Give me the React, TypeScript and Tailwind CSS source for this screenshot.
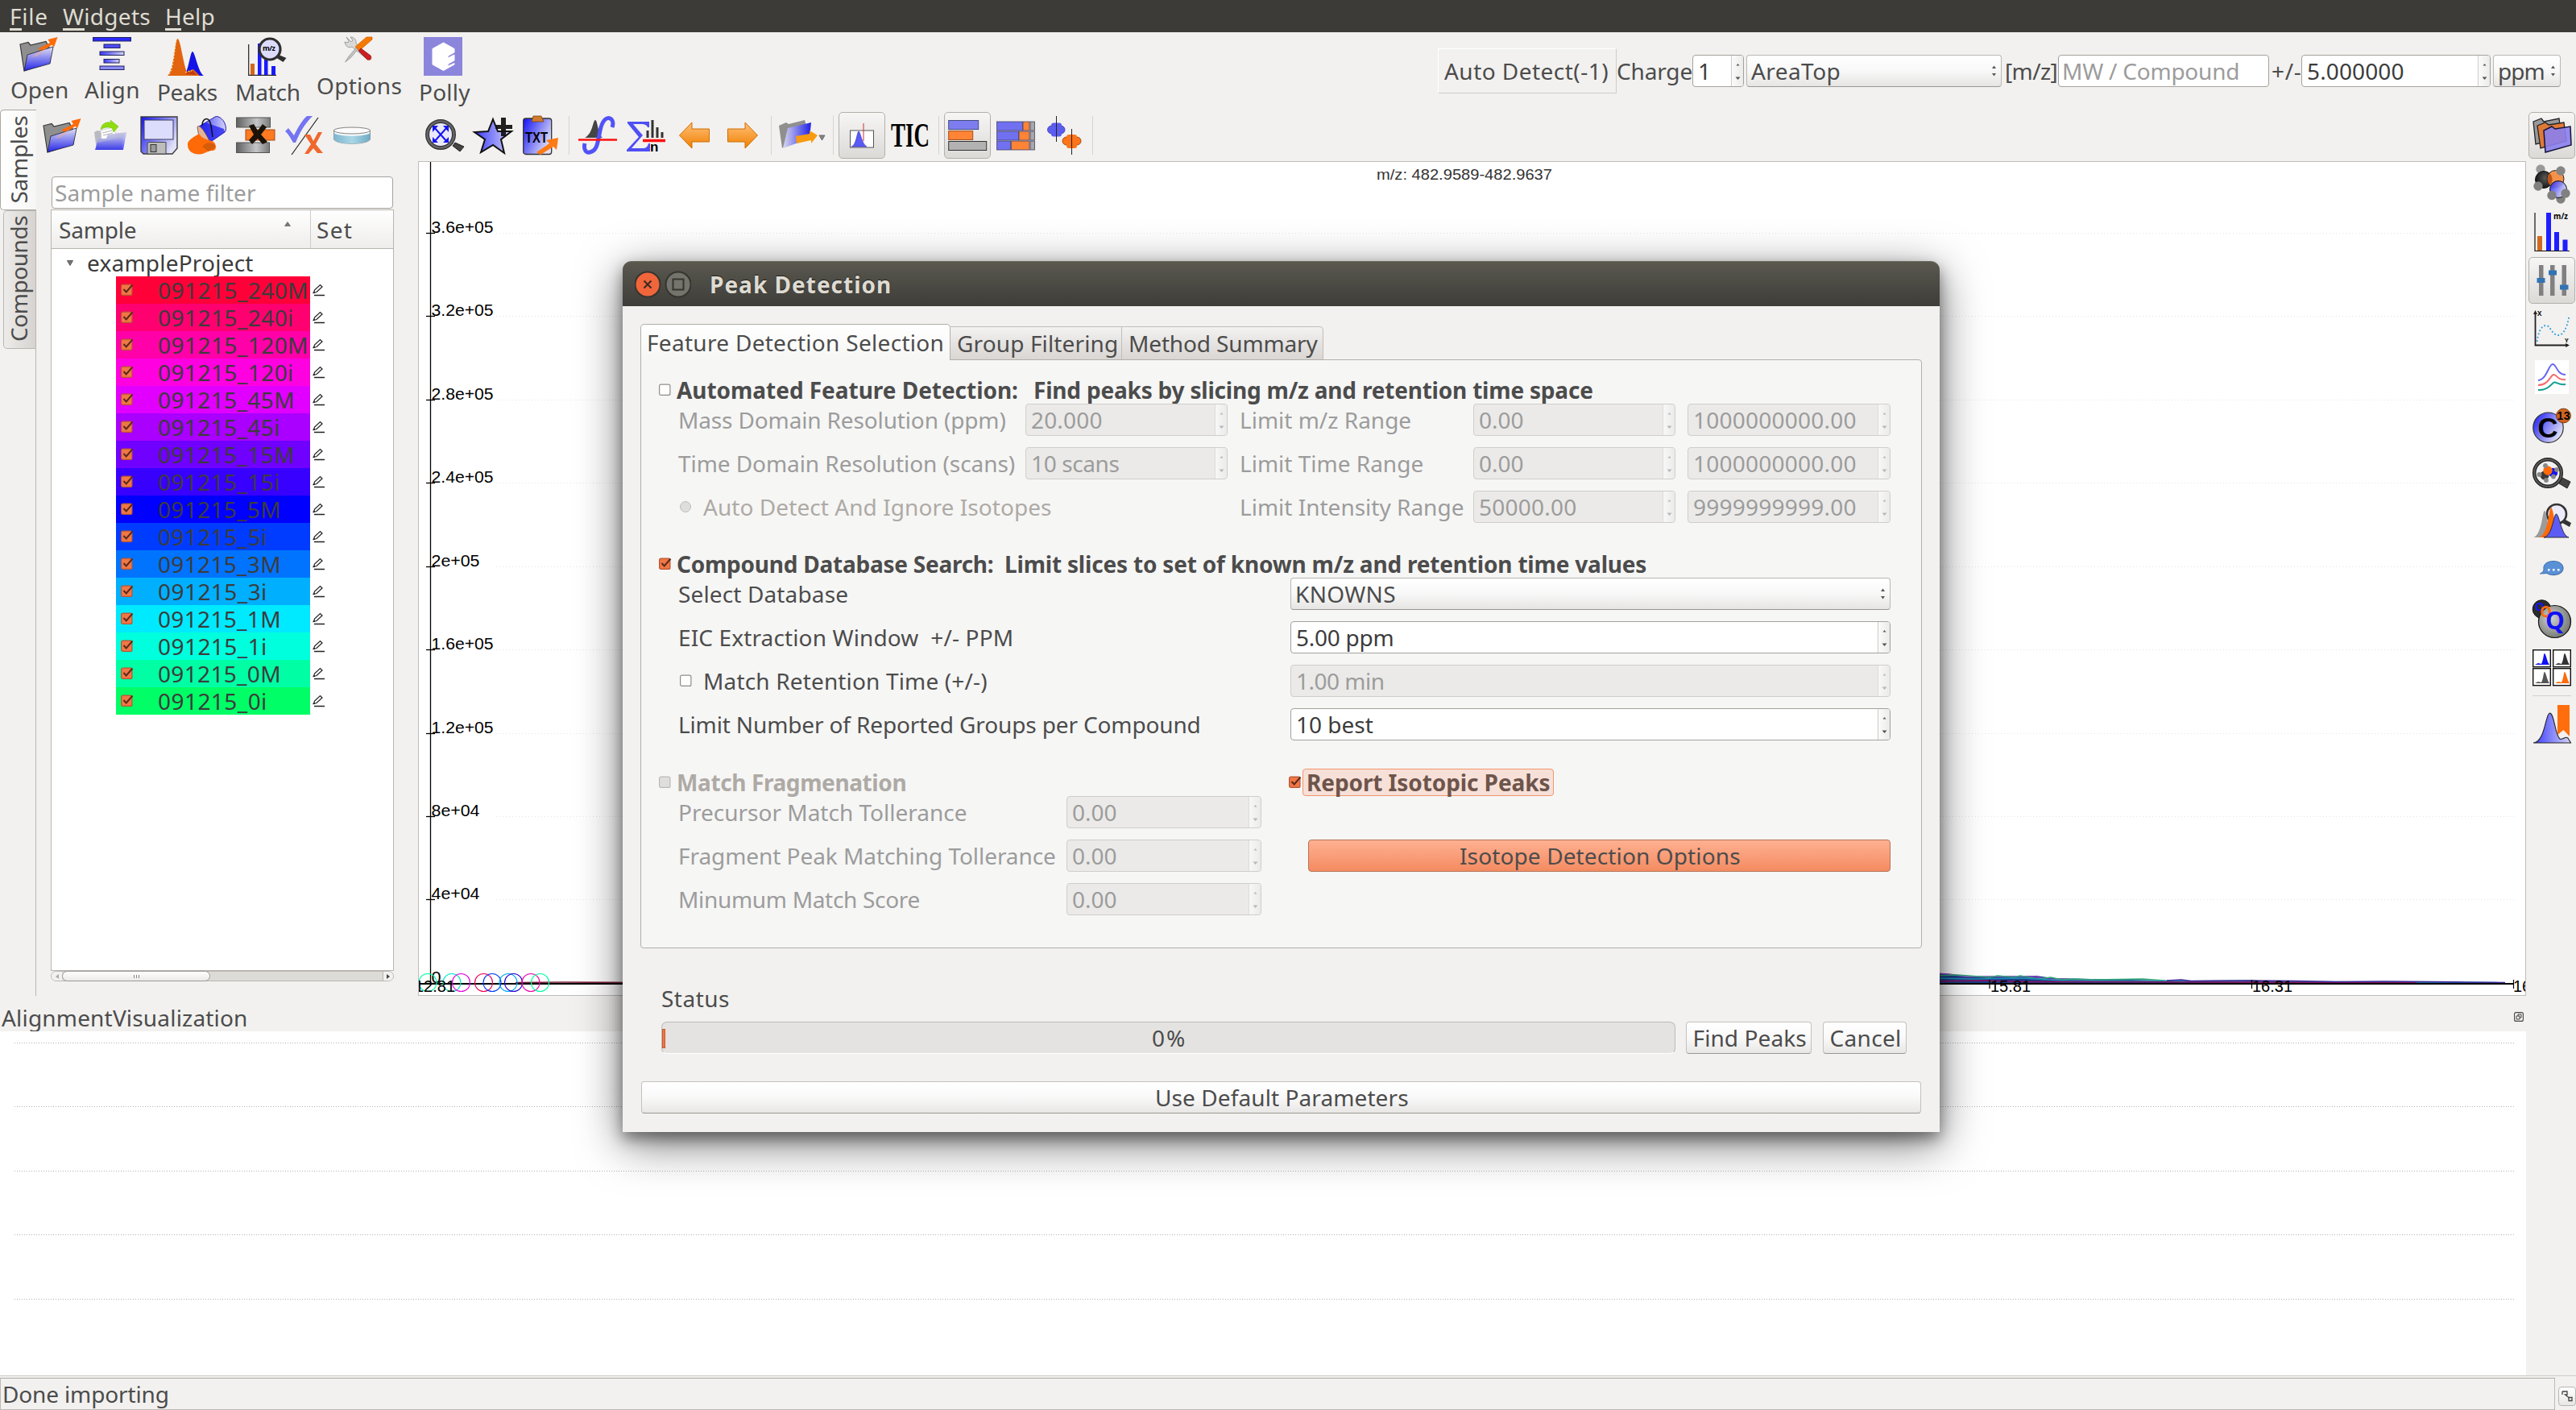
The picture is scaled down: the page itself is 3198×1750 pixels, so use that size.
import { useLayoutEffect, useRef, type ReactNode } from "react";

/* One line of text whose tracking is adjusted so that it spans `w` pixels. */
function T({ w, children, className = "" }: { w: number; children: string; className?: string }) {
  const ref = useRef<HTMLSpanElement>(null);
  useLayoutEffect(() => {
    const el = ref.current;
    if (!el) return;
    el.style.letterSpacing = "0px";
    const natural = el.offsetWidth;
    el.style.letterSpacing = `${(w + 2 - natural) / children.length}px`;
  }, [w, children]);
  return (
    <span className={`block shrink-0 whitespace-pre ${className}`} style={{ width: w }}>
      <span ref={ref} className="inline-block">
        {children}
      </span>
    </span>
  );
}

function Svg({ w = 48, h = 48, vb, className = "", children }: { w?: number; h?: number; vb?: string; className?: string; children: ReactNode }) {
  return (
    <svg width={w} height={h} viewBox={vb ?? `0 0 ${w} ${h}`} className={`block shrink-0 overflow-visible ${className}`}>
      {children}
    </svg>
  );
}

function Defs() {
  return (
    <svg width="0" height="0" className="absolute">
      <defs>
        <linearGradient id="blueDown" x1="0" y1="0" x2="0" y2="1">
          <stop offset="0" stopColor="#e8e8fb" />
          <stop offset="1" stopColor="#1c1cf0" />
        </linearGradient>
        <linearGradient id="blueUp" x1="0" y1="0" x2="1" y2="0.6">
          <stop offset="0" stopColor="#1111f5" />
          <stop offset="1" stopColor="#e0e0f6" />
        </linearGradient>
        <linearGradient id="blueRight" x1="0" y1="0" x2="1" y2="0">
          <stop offset="0" stopColor="#3a3aff" />
          <stop offset="1" stopColor="#d4d4f4" />
        </linearGradient>
        <linearGradient id="blueLeft" x1="0" y1="0" x2="1" y2="0">
          <stop offset="0" stopColor="#d9d9ee" />
          <stop offset="1" stopColor="#2020e8" />
        </linearGradient>
        <linearGradient id="steel" x1="0" y1="0" x2="1" y2="0">
          <stop offset="0" stopColor="#606060" />
          <stop offset="0.6" stopColor="#c4c6c8" />
          <stop offset="1" stopColor="#7a7a7a" />
        </linearGradient>
        <linearGradient id="orangeArrow" x1="0" y1="0" x2="0" y2="1">
          <stop offset="0" stopColor="#ffc07a" />
          <stop offset="1" stopColor="#f08000" />
        </linearGradient>
        <linearGradient id="water" x1="0" y1="0" x2="1" y2="0">
          <stop offset="0" stopColor="#7db6cf" />
          <stop offset="0.5" stopColor="#a9d6e6" />
          <stop offset="1" stopColor="#6fabc6" />
        </linearGradient>
        <radialGradient id="greyBall" cx="0.4" cy="0.4" r="0.7">
          <stop offset="0" stopColor="#d0d2cf" />
          <stop offset="1" stopColor="#6b6d69" />
        </radialGradient>
        <radialGradient id="blackBall" cx="0.6" cy="0.4" r="0.7">
          <stop offset="0" stopColor="#5a5a5a" />
          <stop offset="1" stopColor="#0a0a0a" />
        </radialGradient>
      </defs>
    </svg>
  );
}

function OpenIcon() {
  return (
    <Svg>
      <path d="M1 9 11 6.500 14 10 33 5.500 37 13 38 31 6 42Z" fill="#8f8f8f" stroke="#3a3a3a" strokeWidth="1.2" />
      <path d="M24 14 38 7 35.500 3 47.500 0 43 12.500 40.500 9.500 27 19Z" fill="#ff6a08" />
      <path d="M10 22 42 12 38 33 6 42Z" fill="url(#blueDown)" fillOpacity="0.93" stroke="#2a2a40" strokeWidth="0.9" />
      <path d="M15 25 31 14 34 14 22 24Z" fill="#f3a98c" opacity="0.45" />
    </Svg>
  );
}

function AlignIcon() {
  return (
    <Svg>
      <g fill="url(#blueRight)" stroke="#222260" strokeWidth="1">
        <rect x="0.500" y="0.500" width="47" height="4.500" fill="#2a2aff" />
        <rect x="14" y="9" width="20" height="4.500" fill="#4c4cf6" />
        <rect x="9" y="18" width="30" height="4.500" />
        <rect x="14" y="27.500" width="19" height="4.500" />
        <rect x="9" y="36" width="30" height="4.500" fill="#8b8bf4" />
      </g>
    </Svg>
  );
}

function PeaksIcon() {
  return (
    <Svg>
      <path d="M20 48C26 44 28 18 31 18S38 44 45 48Z" fill="#1414e6" />
      <path d="M0 48C8 42 9 2 12.500 2S20 36 24 43L32 40 40 48Z" fill="#e2640f" />
      <path d="M22 46 26 43 28 44 31 41 36 47Z" fill="#c33c12" />
      <path d="M2 46C8 40 9 4 12 2M22 44 26 42 28 43 32 40" fill="none" stroke="#ffef9a" strokeWidth="1" strokeDasharray="2 2" />
    </Svg>
  );
}

function MatchIcon() {
  return (
    <Svg>
      <path d="M0.700 9V47.400H35" fill="none" stroke="#222" strokeWidth="1.2" />
      <rect x="3" y="33" width="5" height="14" fill="#d2651f" />
      <rect x="12" y="8" width="4.500" height="39" fill="#1a1aff" />
      <rect x="20" y="28" width="4.500" height="19" fill="#1a1aff" />
      <rect x="29" y="36" width="5" height="11" fill="#1a1aff" />
      <circle cx="27" cy="15" r="13" fill="#dcdcfa" stroke="#2f2f2f" strokeWidth="3.200" />
      <path d="M38 22 47.500 26 43.500 31 35.500 26Z" fill="#2f2f2f" />
      <text x="18" y="17" fontSize="9" fontWeight="bold" fontFamily="Open Sans, sans-serif" textLength="16">m/z</text>
    </Svg>
  );
}

function OptionsIcon() {
  return (
    <Svg w={34} h={31}>
      <path d="M2 0 5 5 4 7 0 6C1 12 5 14 9 12L27 27 30 24 14 8C15 3 11 0 7 0L10 4 8 6Z" fill="#d9dad8" stroke="#8d8d8d" strokeWidth="0.8" />
      <path d="M0.500 31 5 24 17 10 19 12 7 26Z" fill="#c4c4c4" stroke="#888" strokeWidth="0.700" />
      <path d="M13 12 27 0H34V3L18 17Z" fill="#f57900" stroke="#d05d00" strokeWidth="0.700" />
      <path d="M17 17 20 14 32 23C34 27 32 29 28 28Z" fill="#cc1f1f" stroke="#8f1414" strokeWidth="0.800" />
    </Svg>
  );
}

function PollyIcon() {
  return (
    <Svg>
      <rect width="48" height="48" fill="#8b85dc" />
      <path d="M24.500 7 38 14.500V19L30 23.500V26L38 22V29L30 33.500V36L38 32.500V34L24.500 41.500 11 34V14.500Z" fill="#fff" stroke="#fff" strokeWidth="1" strokeLinejoin="round" />
    </Svg>
  );
}

function ImportIcon() {
  return (
    <Svg w={40}>
      <path d="M0 20 4 18 9 19 11 23 36 21 34 42 3 42Z" fill="#b9b9c4" />
      <path d="M8 18 24 14 28 26 9 30Z" fill="#fff" stroke="#c4c4c4" strokeWidth="0.700" />
      <path d="M10 21 22 18M11 24 23 21" stroke="#9a9a9a" strokeWidth="0.800" />
      <path d="M8 17C9 9 15 7 21 8L20 5 30 13 24 20 22 15C16 13 12 14 8 17Z" fill="#8fdc10" stroke="#6db50a" strokeWidth="0.500" />
      <path d="M5 28 15 28 17 23 40 20 36 42 1 42Z" fill="url(#blueDown)" fillOpacity="0.800" />
      <path d="M5 28 15 28 17 23 40 20 39 26 4 33Z" fill="#b5b5d8" opacity="0.600" />
    </Svg>
  );
}

function SaveIcon() {
  return (
    <Svg w={47}>
      <path d="M1 1H46V40L40 47H4L1 44Z" fill="url(#blueUp)" stroke="#3c3c3c" strokeWidth="1.400" />
      <rect x="5" y="5" width="36" height="24" fill="#dcdcfc" stroke="#3c3c60" />
      <path d="M9 47V34Q9 32.500 11 32.500H32V47Z" fill="#bdbdbd" stroke="#444" />
      <rect x="13" y="35.500" width="7" height="9" fill="#9a9a9a" stroke="#333" />
    </Svg>
  );
}

function PaintIcon() {
  return (
    <Svg>
      <path d="M14 13 34 1C38 -1 44 4 46 9S48 18 46 20L27 33Z" fill="url(#blueRight)" stroke="#2222aa" strokeWidth="1" />
      <path d="M14 13 27 33 46 20 45 16 22 8Z" fill="#1c1cee" opacity="0.750" />
      <path d="M12 14C13 9 20 16 27 31L22 34 14 26Z" fill="#e5b294" stroke="#6b4a3c" strokeWidth="0.800" />
      <path d="M14 22C8 26-1 30 0 36 0 43 6 47.500 14 47.500S24 43 30 43 36 37 33 33 20 31 14 22Z" fill="#ff6a08" />
      <path d="M18 38C24 30 32 34 34 36 35 41 30 40 26 44Z" fill="#c45708" opacity="0.700" />
      <path d="M18 12C18 4 24 1 27 6S30 22 31 26" fill="none" stroke="#111" strokeWidth="1.500" />
    </Svg>
  );
}

function ClearIcon() {
  return (
    <Svg>
      <rect x="0.500" y="2" width="42" height="12" fill="url(#steel)" stroke="#555" />
      <rect x="12" y="17" width="36" height="13" fill="#ff7a20" stroke="#a34a10" />
      <rect x="0.500" y="33" width="41" height="12.500" fill="url(#steel)" stroke="#555" />
      <path d="M16 12 22 10 27 18 33 10 38 14 31 23 39 32 33 35 27 28 20 35 16 30 22 23Z" fill="#1b1208" />
    </Svg>
  );
}

function CheckCrossIcon() {
  return (
    <Svg w={47}>
      <path d="M0 19 4 15 11 24C16 14 22 4 27 0H34C25 9 18 20 13 33H10C7 28 4 22 0 19Z" fill="#7474f2" />
      <path d="M41 2 8 48" stroke="#222" strokeWidth="1.200" />
      <path d="M24 23 31 23 35 31 41 20H46L38 35 47 46H40L35 40 29 47H24L32 35Z" fill="#f0672e" />
    </Svg>
  );
}

function DishIcon() {
  return (
    <Svg w={46}>
      <path d="M0.500 18V29C4 36 42 36 45.500 29V18Z" fill="#f5f9fa" stroke="#777" strokeWidth="0.800" />
      <path d="M0.500 21C6 26 40 26 45.500 21V29C42 36 4 36 0.500 29Z" fill="url(#water)" />
      <ellipse cx="23" cy="18" rx="22.500" ry="4" fill="#fbfbfb" stroke="#666" strokeWidth="0.800" />
    </Svg>
  );
}

function ZoomFitIcon() {
  return (
    <Svg>
      <circle cx="19" cy="23" r="16.500" fill="#e9e9fa" stroke="#333" strokeWidth="5" />
      <circle cx="19" cy="23" r="16.500" fill="none" stroke="#666" strokeWidth="2.500" />
      <path d="M37 33 48 38 43 44 34 37Z" fill="#444" stroke="#222" />
      <path d="M11 14 27 32M27 14 11 32" stroke="#1414f0" strokeWidth="2" />
      <path d="M9 12H16L9 20ZM29 12H22L29 20ZM9 33H16L9 26ZM29 33H22L29 26Z" fill="#1414f0" />
    </Svg>
  );
}

function StarIcon() {
  return (
    <Svg>
      <path d="M24 4 30 19 47 19 34 29 38 46 24 36 9 45 14 29 1 20 18 19Z" fill="url(#blueRight)" stroke="#111" strokeWidth="2" />
      <path d="M34 2H40V11H48V16H40V25H34V16H27V11H34Z" fill="#111" opacity="0.930" />
    </Svg>
  );
}

function TxtIcon() {
  return (
    <Svg w={44}>
      <rect x="0.700" y="3" width="35" height="44.500" rx="3" fill="url(#blueUp)" stroke="#333" strokeWidth="1.300" />
      <path d="M11 7 13 0H23L26 7Z" fill="#d07a2c" stroke="#7a4312" strokeWidth="0.800" />
      <text x="3" y="33" fontSize="18" fontWeight="bold" fontFamily="Liberation Sans, sans-serif" textLength="28" lengthAdjust="spacingAndGlyphs">TXT</text>
      <path d="M17 45 33 34 29 30 44 27 42 42 38 38 22 48Z" fill="#ff7a14" />
    </Svg>
  );
}

function IntegralIcon() {
  return (
    <Svg>
      <path d="M8 27C18 22 18 5 21 5S24 22 30 27Z" fill="#444" />
      <path d="M8 34C6 42 10 46 14 45 24 43 24 32 27 18 30 4 36 0 41 4 44 7 43 11 42 14" fill="none" stroke="#5252f8" strokeWidth="5" />
      <path d="M0 29.500H48" stroke="#ff1010" strokeWidth="2.600" />
    </Svg>
  );
}

function SigmaIcon() {
  return (
    <Svg>
      <path d="M1 7H28V14H26C25 11 22 10 18 10H8L20 24 6 40H20C24 40 26 38 27 34H29V44H0V42L15 26 1 9Z" fill="#4f4ff5" />
      <path d="M26 27V18M32 27V5M38 27V14M44 27V20" stroke="#333" strokeWidth="3" />
      <path d="M20 30.500H48" stroke="#ff1010" strokeWidth="3.500" />
      <text x="29" y="43.500" fontSize="17" fontWeight="bold" fontFamily="Liberation Sans, sans-serif">n</text>
    </Svg>
  );
}

function ArrowIcon({ flip = false }: { flip?: boolean }) {
  return (
    <Svg w={38}>
      <g transform={flip ? "translate(38 0) scale(-1 1)" : undefined}>
        <path d="M0.500 24 16 8V16H37.500V32H16V40Z" fill="url(#orangeArrow)" stroke="#d06c00" strokeWidth="1" />
      </g>
    </Svg>
  );
}

function ExportIcon() {
  return (
    <Svg w={58}>
      <path d="M0 12 9 8 12 10 32 5 34 12 4 40Z" fill="#8f8f8f" />
      <path d="M11 15 40 8 38 28 5 40Z" fill="url(#blueLeft)" />
      <path d="M21 25 38 22V18L48 24 40 34V30L22 34Z" fill="#f99b10" />
      <path d="M50 24H57L53.500 30Z" fill="#888" stroke="#555" strokeWidth="0.800" />
    </Svg>
  );
}

function EicIcon() {
  return (
    <Svg w={30} h={31}>
      <rect x="0.500" y="9" width="29" height="21" fill="#fff" stroke="#555" />
      <path d="M2 29C8 28 9 10 11 10S15 26 21 29Z" fill="#5a5af6" stroke="#2a2ab8" strokeWidth="0.600" />
      <path d="M17 0V22" stroke="#d03030" strokeWidth="1" />
    </Svg>
  );
}

function TicIcon() {
  return (
    <Svg>
      <text x="0" y="38" fontSize="42" fontWeight="bold" fontFamily="Liberation Serif, serif" textLength="48" lengthAdjust="spacingAndGlyphs">TIC</text>
    </Svg>
  );
}

function BarsIcon() {
  return (
    <Svg w={48} h={40}>
      <rect x="0.700" y="1.500" width="37" height="11" fill="#7d7df0" stroke="#444a80" />
      <rect x="0.700" y="14.500" width="30" height="11" fill="#ff8436" stroke="#a05020" />
      <rect x="0.700" y="27.500" width="47" height="11" fill="#b2b2b2" stroke="#333" />
    </Svg>
  );
}

function GridIcon() {
  return (
    <Svg>
      <g stroke="#44446a" strokeWidth="0.800">
        <rect x="0.500" y="7" width="32" height="11" fill="#7070f0" />
        <rect x="33" y="7" width="8" height="11" fill="#ff8436" />
        <rect x="42" y="7" width="5.500" height="11" fill="#a8a8a8" />
        <rect x="0.500" y="19" width="27" height="11" fill="#7070f0" />
        <rect x="28" y="19" width="13" height="11" fill="#ff8436" />
        <rect x="42" y="19" width="5.500" height="11" fill="#a8a8a8" />
        <rect x="0.500" y="31" width="17" height="11" fill="#7070f0" />
        <rect x="18.500" y="31" width="22.500" height="11" fill="#ff8436" />
        <rect x="42" y="31" width="5.500" height="11" fill="#a8a8a8" />
      </g>
    </Svg>
  );
}

function NodesIcon() {
  return (
    <Svg w={43}>
      <g stroke="#3838a0" fill="#5c5cf0" strokeWidth="0.800">
        <circle cx="5.500" cy="17" r="5" />
        <circle cx="17" cy="17" r="5" />
        <rect x="5" y="8.500" width="13" height="17" rx="3" stroke="none" />
      </g>
      <g stroke="#8a3a0a" fill="#ff7418" strokeWidth="0.800">
        <circle cx="24" cy="31" r="5" />
        <circle cx="37" cy="31" r="5" />
        <rect x="24" y="23" width="13" height="17" rx="3" stroke="none" />
      </g>
      <path d="M11.500 0V32M30.500 16V48" stroke="#222" strokeWidth="1" />
    </Svg>
  );
}

/* ---- right-hand tool strip ---- */

function FoldersIcon() {
  return (
    <Svg>
      <path d="M1 4 11 0 14 4 33 0 36 24 4 32Z" fill="#97999b" stroke="#222" strokeWidth="1.300" />
      <path d="M6 9 16 5 20 8 39 5 42 28 10 37Z" fill="#e07a38" stroke="#222" strokeWidth="1.300" />
      <path d="M14 15 24 10 28 13 47 10 48 33 16 42Z" fill="#8b7ff0" fillOpacity="0.900" stroke="#15153a" strokeWidth="1.500" />
    </Svg>
  );
}

function MoleculeIcon() {
  return (
    <Svg>
      <circle cx="10" cy="6" r="5.700" fill="#999" />
      <circle cx="14" cy="19" r="10.500" fill="url(#blackBall)" stroke="#111" />
      <circle cx="28.500" cy="18" r="10.500" fill="#f58a3c" fillOpacity="0.920" stroke="#222" />
      <path d="M21.500 11A11 11 0 0 1 21.500 26 11 11 0 0 1 21.500 11" fill="#a8430a" opacity="0.700" />
      <circle cx="35" cy="43" r="5.700" fill="#808080" />
      <circle cx="32" cy="31" r="10.500" fill="url(#blueUp)" fillOpacity="0.900" stroke="#111" />
      <circle cx="35" cy="8" r="5.700" fill="#858585" />
      <circle cx="7" cy="27" r="5.700" fill="#808080" />
      <circle cx="24" cy="38.500" r="5.700" fill="#808080" />
      <circle cx="41" cy="36" r="5.700" fill="#808080" />
    </Svg>
  );
}

function SpectraIcon() {
  return (
    <Svg>
      <path d="M3 0V47.500H46" fill="none" stroke="#111" strokeWidth="1.200" />
      <rect x="6" y="29" width="6" height="18" fill="#d2691e" />
      <rect x="17" y="0" width="6" height="47" fill="#1e1eff" />
      <rect x="27" y="24" width="6" height="23" fill="#1e1eff" />
      <rect x="37.500" y="33.500" width="6" height="14" fill="#1e1eff" />
      <text x="26" y="8" fontSize="11" fontWeight="bold" fontFamily="Open Sans, sans-serif" textLength="18" lengthAdjust="spacingAndGlyphs">m/z</text>
    </Svg>
  );
}

function SlidersIcon() {
  return (
    <Svg>
      <g fill="#808080">
        <rect x="8" y="5" width="5.500" height="38" />
        <rect x="22" y="5" width="5.500" height="38" />
        <rect x="36.500" y="5" width="5.500" height="38" />
      </g>
      <g fill="#3273b4">
        <rect x="5.500" y="21" width="10" height="6" />
        <rect x="20" y="11.500" width="10" height="6" />
        <rect x="34" y="29.500" width="10.500" height="6" />
      </g>
    </Svg>
  );
}

function ScatterIcon() {
  return (
    <Svg>
      <path d="M3.500 4V43.500H44" fill="none" stroke="#222" strokeWidth="1.800" />
      <path d="M3.500 0 6 5H1ZM46 43.500 41 41V46Z" fill="#222" />
      <path d="M5.500 39C8 24 12 19 17 19S24 30 31 31 43 22 45.500 7" fill="none" stroke="#2b9fe0" strokeWidth="1.900" strokeDasharray="1.800 2.600" />
      <text x="6" y="7" fontSize="8" fontWeight="bold" fontFamily="Open Sans, sans-serif">X</text>
      <text x="40" y="40" fontSize="7.500" fontWeight="bold" fontFamily="Open Sans, sans-serif">Y</text>
    </Svg>
  );
}

function WavesIcon() {
  return (
    <Svg>
      <rect x="3" y="3" width="42" height="42" fill="#fff" />
      <g fill="none" strokeWidth="2">
        <path d="M7 28C18 27 20 8 25 8S30 21 41 21" stroke="#6666f5" />
        <path d="M7 34C20 34 22 22 26 21S31 29 41 27" stroke="#f76a6a" />
        <path d="M7 40C20 41 24 31 27 30.500S32 34 41 33" stroke="#12a090" />
      </g>
    </Svg>
  );
}

function CarbonIcon() {
  return (
    <Svg>
      <circle cx="19.500" cy="26.700" r="18.700" fill="url(#blueUp)" stroke="#333" strokeWidth="1.200" />
      <text x="6.500" y="39" fontSize="35" fontWeight="bold" fontFamily="Liberation Sans, sans-serif" textLength="25" lengthAdjust="spacingAndGlyphs">C</text>
      <circle cx="38.500" cy="12" r="8.900" fill="#cf6420" stroke="#7a3a10" />
      <text x="30.500" y="17" fontSize="14" fontWeight="bold" fontFamily="Liberation Sans, sans-serif" textLength="16">13</text>
    </Svg>
  );
}

function MoleculeSearchIcon() {
  return (
    <Svg>
      <circle cx="19" cy="24" r="16.800" fill="#f1f1f1" stroke="#222" strokeWidth="4.500" />
      <circle cx="19" cy="24" r="16.800" fill="none" stroke="#5a5a5a" strokeWidth="2" />
      <path d="M37 30 47 35 43 43 33 37Z" fill="#444" stroke="#222" />
      <circle cx="15" cy="27" r="5.500" fill="#3a3a3a" />
      <circle cx="25.500" cy="23.500" r="5.700" fill="#1414f0" />
      <circle cx="19" cy="21" r="5.700" fill="#ff6a08" />
      <g fill="#888">
        <circle cx="16" cy="15" r="2.900" />
        <circle cx="30" cy="20" r="2.900" />
        <circle cx="26" cy="28.500" r="2.900" />
        <circle cx="17" cy="33" r="2.900" />
        <circle cx="8.500" cy="26" r="2.900" />
      </g>
    </Svg>
  );
}

function PeakSearchIcon() {
  return (
    <Svg>
      <circle cx="30" cy="16" r="12" fill="#ebebfa" stroke="#333" strokeWidth="2.600" />
      <path d="M39 22 48 27 46 32 37 27Z" fill="#333" />
      <path d="M1 45C12 42 12 12 15 12S19 36 24 45Z" fill="#9b9b9b" />
      <path d="M8 45C20 42 20 8 23 8S28 36 33 45Z" fill="#ff6a08" />
      <path d="M14 45C25 43 26 16 29.500 16S36 43 45 45Z" fill="#5c5cf5" stroke="#222" strokeWidth="0.900" />
    </Svg>
  );
}

function ChatIcon() {
  return (
    <Svg>
      <ellipse cx="26.500" cy="24" rx="12" ry="8.500" fill="#aaa" opacity="0.700" />
      <path d="M14 24C13 18 19 14.500 26 14.500S38 18 38 23 33 31.500 26 31.500C23 31.500 20 31 18 29.500L9.500 30C13 28 14 27 14 24Z" fill="#5a90d6" stroke="#3a6cab" strokeWidth="1" />
      <g fill="#fff">
        <rect x="19" y="24" width="2.500" height="2.500" />
        <rect x="25" y="24" width="2.500" height="2.500" />
        <rect x="31" y="24" width="2.500" height="2.500" />
      </g>
    </Svg>
  );
}

function QQQIcon() {
  return (
    <Svg>
      <circle cx="11.500" cy="12" r="11.300" fill="#2c2c2c" stroke="#111" />
      <circle cx="27.500" cy="27.500" r="20" fill="url(#greyBall)" stroke="#111" strokeWidth="1.200" />
      <g fontWeight="bold" fontFamily="Open Sans, sans-serif">
        <text x="3" y="14" fontSize="15" fill="#1414f0">Q</text>
        <text x="9" y="22" fontSize="19" fill="#ff6a08">Q</text>
        <text x="16" y="37" fontSize="30" fill="#1010f5">Q</text>
      </g>
    </Svg>
  );
}

const tiles = [
  { x: 0, y: 1, c: "#1010f5" },
  { x: 25, y: 1, c: "#333" },
  { x: 0, y: 24, c: "#555" },
  { x: 25, y: 24, c: "#ff6a08" },
];

function TilesIcon() {
  return (
    <Svg>
      {tiles.map((t) => (
        <g key={`${t.x}-${t.y}`} transform={`translate(${t.x} ${t.y})`}>
          <rect x="0.700" y="0.700" width="21.600" height="21" fill="#fff" stroke="#111" strokeWidth="1.400" />
          <path d="M3 19 7 17 11 18C14 12 13.500 5 15 5S18 15 21 19Z" fill={t.c} />
        </g>
      ))}
    </Svg>
  );
}

function BookmarkIcon() {
  return (
    <Svg>
      <path d="M1 47C16 46 16 10 21.500 10S28 38 34 42C38 44 40 38 44 41L47.500 47Z" fill="url(#blueRight)" stroke="#222" strokeWidth="1.100" />
      <path d="M31 0H46V39L38.500 31 31 37Z" fill="#ff6d0c" />
    </Svg>
  );
}

/* ---- small controls ---- */

function Check({ on = false, disabled = false }: { on?: boolean; disabled?: boolean }) {
  return (
    <svg width="16" height="16" viewBox="0 0 16 16" className="block shrink-0">
      <rect x="0.600" y="1.100" width="13.300" height="13.300" rx="2" fill={on ? "#f07746" : disabled ? "#dededc" : "#fff"} stroke={on ? "#b9562f" : disabled ? "#bcbab6" : "#8f8d88"} strokeWidth="1.200" />
      {on && <path d="M3.500 7 6.700 10.500 14.500 1.500" fill="none" stroke="#5c2a1a" strokeWidth="2" />}
    </svg>
  );
}

function Spin({ className = "", disabled = false, children }: { className?: string; disabled?: boolean; children: ReactNode }) {
  return (
    <div className={`flex h-10 shrink-0 overflow-hidden rounded-[4px] border ${disabled ? "border-[#d0cecb] bg-[#ebeae8] text-[#9c9c9c]" : "border-[#a5a29d] bg-white text-[#3c3c3c]"} ${className}`}>
      <div className="flex min-w-0 grow items-center pl-[6px]">{children}</div>
      <div className={`flex w-[15px] shrink-0 flex-col items-center justify-between border-l bg-linear-to-r from-[#fbfbfb] to-[#ebebe9] pt-[9px] pb-[7px] ${disabled ? "border-[#dbd9d6] opacity-80" : "border-[#cfccc8]"}`}>
        <svg width="7" height="4" viewBox="0 0 7 4"><path d="M1.500 3.500 3.500 1 5.500 3.500Z" fill={disabled ? "#aaa" : "#555"} /></svg>
        <svg width="7" height="5" viewBox="0 0 7 5"><path d="M0.500 0.500H6.500L3.500 4Z" fill={disabled ? "#aaa" : "#555"} /></svg>
      </div>
    </div>
  );
}

function Combo({ className = "", children }: { className?: string; children: ReactNode }) {
  return (
    <div className={`flex h-10 shrink-0 items-center justify-between rounded-[4px] border border-[#bbb8b3] border-b-[#9a9894] bg-linear-to-b from-white via-[#f8f8f8] to-[#e6e5e3] ${className}`}>
      {children}
      <span className="flex flex-col items-center gap-[6px]">
        <svg width="7" height="4" viewBox="0 0 7 4"><path d="M1 4 3.500 0.500 6 4Z" fill="#555" /></svg>
        <svg width="7" height="4" viewBox="0 0 7 4"><path d="M1 0H6L3.500 3.500Z" fill="#555" /></svg>
      </span>
    </div>
  );
}

function Sep() {
  return <div className="h-12 w-px shrink-0 bg-[#d6d3cf]" />;
}

const pressed = "rounded-[5px] border border-[#b3b0ab] bg-linear-to-b from-[#f6f6f5] to-[#dcdad7]";
const plainButton = "flex items-center justify-center rounded-[4px] border border-[#c4c1bc] border-b-[#9a9894] bg-linear-to-b from-white via-[#f9f9f9] to-[#e8e7e5]";

/* ---- top area ---- */

function MenuBar() {
  return (
    <div className="flex h-10 shrink-0 items-center bg-[#3c3b37] pl-3 text-[#dfdbd2]">
      <div className="relative mr-[20px]"><T w={46}>File</T><i className="absolute top-[32px] left-0 h-[3px] w-[15px] bg-[#dfdbd2]" /></div>
      <div className="relative mr-[20px]"><T w={107}>Widgets</T><i className="absolute top-[32px] left-0 h-[3px] w-[27px] bg-[#dfdbd2]" /></div>
      <div className="relative"><T w={60}>Help</T><i className="absolute top-[32px] left-0 h-[3px] w-[20px] bg-[#dfdbd2]" /></div>
    </div>
  );
}

function MainToolbar() {
  return (
    <div className="flex h-[93px] shrink-0 items-start pl-[13px]">
      <div className="mr-[22px] flex flex-col items-center pt-[6px]"><OpenIcon /><T w={70}>Open</T></div>
      <div className="mr-[23px] flex flex-col items-center pt-[6px]"><AlignIcon /><T w={67}>Align</T></div>
      <div className="mr-[24px] flex flex-col items-center gap-[3px] pt-[6px]"><PeaksIcon /><T w={73}>Peaks</T></div>
      <div className="mr-[22px] flex flex-col items-center gap-[3px] pt-[6px]"><MatchIcon /><T w={79}>Match</T></div>
      <div className="mr-[23px] flex flex-col items-center gap-3 pt-[6px]"><OptionsIcon /><T w={104}>Options</T></div>
      <div className="flex flex-col items-center gap-[3px] pt-[6px]"><div className="pr-[3px]"><PollyIcon /></div><T w={62}>Polly</T></div>
      <div className="mt-5 ml-auto flex h-[56px] w-[222px] items-center border border-[#cfccc8] border-t-white border-l-white pl-[7px]">
        <T w={202}>Auto Detect(-1)</T>
      </div>
      <div className="mt-7 mr-[19px] flex h-10 items-center">
        <T w={92}>Charge</T>
        <Spin className="ml-[2px] w-[64px]"><T w={12}>1</T></Spin>
        <Combo className="ml-[3px] w-[317px] pr-[5px] pl-[5px]"><T w={109}>AreaTop</T></Combo>
        <T w={63} className="ml-[4px]">[m/z]</T>
        <div className="ml-[3px] flex h-10 w-[262px] items-center rounded-[4px] border border-[#a5a29d] bg-white pl-[4px] text-[#9c9c9c]"><T w={218}>MW / Compound</T></div>
        <T w={35} className="ml-[3px]">+/-</T>
        <Spin className="ml-[2px] w-[235px]"><T w={119}>5.000000</T></Spin>
        <Combo className="ml-[3px] w-[84px] pr-[5px] pl-[5px]"><T w={56}>ppm</T></Combo>
      </div>
    </div>
  );
}

/* ---- samples dock ---- */

const samples = [
  { name: "091215_240M", w: 185, bg: "bg-[#ff0038]" },
  { name: "091215_240i", w: 167, bg: "bg-[#ff0070]" },
  { name: "091215_120M", w: 185, bg: "bg-[#ff00a9]" },
  { name: "091215_120i", w: 167, bg: "bg-[#ff00e1]" },
  { name: "091215_45M", w: 168, bg: "bg-[#e100ff]" },
  { name: "091215_45i", w: 150, bg: "bg-[#a900ff]" },
  { name: "091215_15M", w: 168, bg: "bg-[#7000ff]" },
  { name: "091215_15i", w: 150, bg: "bg-[#3800ff]" },
  { name: "091215_5M", w: 151, bg: "bg-[#0000ff]" },
  { name: "091215_5i", w: 134, bg: "bg-[#003cff]" },
  { name: "091215_3M", w: 151, bg: "bg-[#0074ff]" },
  { name: "091215_3i", w: 134, bg: "bg-[#00b0ff]" },
  { name: "091215_1M", w: 151, bg: "bg-[#00eaff]" },
  { name: "091215_1i", w: 134, bg: "bg-[#00ffdd]" },
  { name: "091215_0M", w: 151, bg: "bg-[#00ffa5]" },
  { name: "091215_0i", w: 134, bg: "bg-[#00ff66]" },
];

function SampleTree() {
  return (
    <div className="ml-[18px] flex h-[945px] w-[426px] flex-col border border-[#b9b6b1] bg-white">
      <div className="flex h-[48px] shrink-0 border-b border-[#b9b6b1] bg-linear-to-b from-white to-[#eeedeb]">
        <div className="flex w-[322px] items-center border-r border-[#cfccc8] pl-[9px]">
          <T w={95}>Sample</T>
          <svg width="8" height="6" viewBox="0 0 8 6" className="mb-[13px] ml-[185px]"><path d="M0.500 5.500 4 0.500 7.500 5.500Z" fill="#777" stroke="#555" strokeWidth="0.600" /></svg>
        </div>
        <div className="flex items-center pl-[7px]"><T w={43}>Set</T></div>
      </div>
      <div className="flex h-[34px] shrink-0 items-center pl-[19px] text-[#3c3c3c]">
        <svg width="8" height="7" viewBox="0 0 8 7"><path d="M0.500 0.500H7.500L4 6.500Z" fill="#777" stroke="#444" strokeWidth="0.800" /></svg>
        <T w={205} className="ml-[17px]">exampleProject</T>
      </div>
      {samples.map((s) => (
        <div key={s.name} className="flex h-[34px] shrink-0 items-center pl-[80px] text-[#3c3c3c]">
          <div className={`flex h-[34px] w-[241px] items-center pl-[6px] ${s.bg}`}>
            <Check on />
            <T w={s.w} className="ml-[30px]">{s.name}</T>
          </div>
          <svg width="16" height="16" viewBox="0 0 16 16" className="ml-[3px]">
            <path d="M1.500 11.500 2.500 8 9.500 1.500 12 4 5 10.500Z" fill="#fff" stroke="#222" strokeWidth="1.200" />
            <path d="M0.500 11.500 3 11M2 14.500H15" stroke="#222" strokeWidth="1.300" />
          </svg>
        </div>
      ))}
    </div>
  );
}

function SamplesDock() {
  return (
    <div className="flex w-[519px] shrink-0">
      <div className="flex w-[45px] shrink-0 flex-col border-[#b9b6b1] pt-[3px]">
        <div className="flex h-[125px] items-center justify-center rounded-l-[5px] border border-r-0 border-[#aaa7a2] bg-linear-to-r from-white to-[#f6f6f5]">
          <div className="mr-[2px] shrink-0 -rotate-90"><T w={107}>Samples</T></div>
        </div>
        <div className="ml-1 flex h-[172px] items-center justify-center rounded-l-[5px] border border-[#b9b6b1] bg-linear-to-r from-[#edecea] to-[#d6d3d0]">
          <div className="mr-[4px] shrink-0 -rotate-90"><T w={154}>Compounds</T></div>
        </div>
        <div className="grow border-r border-[#b9b6b1]" />
      </div>
      <div className="flex grow flex-col pt-[11px]">
        <div className="flex h-12 items-center pl-[8px]">
          <div className="pt-[6px]"><OpenIcon /></div>
          <div className="ml-[16px]"><ImportIcon /></div>
          <div className="ml-[17px]"><SaveIcon /></div>
          <div className="ml-[12px]"><PaintIcon /></div>
          <div className="ml-[12px]"><ClearIcon /></div>
          <div className="ml-[13px]"><CheckCrossIcon /></div>
          <div className="ml-[13px]"><DishIcon /></div>
        </div>
        <div className="mt-[27px] ml-[19px] flex h-[40px] w-[424px] items-center rounded-[4px] border border-[#a5a29d] bg-white pl-[3px] text-[#9c9c9c]">
          <T w={248}>Sample name filter</T>
        </div>
        <div className="mt-px"><SampleTree /></div>
        <div className="ml-[18px] flex h-[13px] w-[426px] rounded-full border border-[#bbb8b3] bg-[#dddbd8]">
          <div className="flex w-[13px] items-center justify-center rounded-l-full bg-[#f2f1ef]"><svg width="4" height="6" viewBox="0 0 4 6"><path d="M4 0V6L0 3Z" fill="#aaa" /></svg></div>
          <div className="-my-px flex w-[184px] items-center justify-center gap-[2px] rounded-full border border-[#9e9b96] bg-linear-to-b from-white to-[#ebeae8]">
            <i className="h-[4px] w-px bg-[#888]" /><i className="h-[4px] w-px bg-[#888]" /><i className="h-[4px] w-px bg-[#888]" />
          </div>
          <div className="ml-auto flex w-[13px] items-center justify-center rounded-r-full border-l border-[#bbb8b3] bg-[#f2f1ef]"><svg width="4" height="6" viewBox="0 0 4 6"><path d="M0 0V6L4 3Z" fill="#444" /></svg></div>
        </div>
      </div>
    </div>
  );
}

/* ---- chromatogram ---- */

const ticks = [
  { y: 289, label: "3.6e+05", w: 75 },
  { y: 392.500, label: "3.2e+05", w: 75 },
  { y: 496, label: "2.8e+05", w: 75 },
  { y: 599.500, label: "2.4e+05", w: 75 },
  { y: 703, label: "2e+05", w: 58 },
  { y: 806.500, label: "1.6e+05", w: 75 },
  { y: 910, label: "1.2e+05", w: 75 },
  { y: 1013, label: "8e+04", w: 58 },
  { y: 1116.500, label: "4e+04", w: 58 },
  { y: 1220, label: "0", w: 10 },
];

const rings = [
  { x: 531, c: "#00ffa5" },
  { x: 561, c: "#00e8c8" },
  { x: 572.500, c: "#e600e1" },
  { x: 600.500, c: "#f00058" },
  { x: 611, c: "#0038f0" },
  { x: 631, c: "#00adf0" },
  { x: 637.500, c: "#2a00d8" },
  { x: 659, c: "#f000a9" },
  { x: 670.500, c: "#00ffa5" },
];

function Chromatogram() {
  return (
    <div className="h-[1036px] w-[2617px] shrink-0 border border-[#c0bdb9] bg-white">
      <svg width="2615" height="1034" viewBox="520 201 2615 1034" className="block overflow-hidden" fontFamily="Liberation Sans, sans-serif" fontSize="20">
        <text x="1709" y="222.500" fontSize="19" fill="#333" textLength="218" lengthAdjust="spacingAndGlyphs">m/z: 482.9589-482.9637</text>
        {ticks.map((t) => (
          <g key={t.label}>
            <path d={`M616 ${Math.floor(t.y) + 0.5}H3122`} stroke="#e4e4e4" strokeWidth="1" strokeDasharray="1 3" />
            <path d={`M529 ${Math.floor(t.y) + 0.5}H540`} stroke="#000" strokeWidth="1.300" />
            <text x="535.500" y={t.y - 0.5} textLength={t.w + 2} lengthAdjust="spacingAndGlyphs">{t.label}</text>
          </g>
        ))}
        <path d="M534.500 200V1221" stroke="#000" strokeWidth="1.300" />
        <path d="M2300 1204C2380 1206 2430 1209 2445 1212L2528 1211 2550 1214 2620 1215.500 2720 1217.500 2850 1218 3000 1219 3110 1219.500V1220.500H2300Z" fill="#1c3c88" />
        <g fill="none" strokeWidth="1.600">
          <path d="M2400 1208 2420 1209 2440 1212 2525 1212 2540 1215 2600 1216" stroke="#9a3fd0" />
          <path d="M2400 1211 2430 1210 2470 1213 2480 1211 2500 1213 2508 1211 2530 1215 2546 1213 2560 1216 2575 1215 2600 1216 2660 1215 2700 1218 2800 1217" stroke="#30a878" />
          <path d="M2400 1214 2450 1215 2510 1214 2560 1217 2650 1217.500 2750 1218 3100 1219.500" stroke="#1d8fb5" />
          <path d="M2400 1218 2460 1217 2520 1218.500 2620 1218.500 2740 1219 3000 1219.500" stroke="#8a1060" />
          <path d="M2690 1217 2708 1216 2720 1217.500 2780 1217 2850 1217.500 2900 1218.500 2960 1218 3060 1219 3110 1219.500" stroke="#3a2a9a" />
          <path d="M640 1219.500 700 1219 780 1219.500" stroke="#7a2038" />
        </g>
        <path d="M520 1221H3121" stroke="#000" strokeWidth="1.800" />
        {rings.map((r) => (
          <circle key={r.x} cx={r.x} cy="1219.500" r="11" fill="none" stroke={r.c} strokeWidth="1.100" />
        ))}
        <path d="M2470 1216V1227M2795.500 1216V1227M3120.500 1216V1227" stroke="#000" strokeWidth="1.200" />
        <text x="515" y="1231" textLength="50" lengthAdjust="spacingAndGlyphs">12.81</text>
        <text x="2471" y="1231" textLength="50" lengthAdjust="spacingAndGlyphs">15.81</text>
        <text x="2796" y="1231" textLength="50" lengthAdjust="spacingAndGlyphs">16.31</text>
        <text x="3120" y="1231">16</text>
      </svg>
    </div>
  );
}

function PlotArea() {
  return (
    <div className="flex w-[2617px] shrink-0 flex-col">
      <div className="flex h-[67px] shrink-0 items-center pt-[3px] pl-[9px]">
        <ZoomFitIcon />
        <div className="ml-[12px]"><StarIcon /></div>
        <div className="ml-[13px]"><TxtIcon /></div>
        <div className="ml-[13px]"><Sep /></div>
        <div className="ml-[11px]"><IntegralIcon /></div>
        <div className="ml-[12px]"><SigmaIcon /></div>
        <div className="ml-[17px]"><ArrowIcon /></div>
        <div className="ml-[22px]"><ArrowIcon flip /></div>
        <div className="ml-[16px]"><Sep /></div>
        <div className="ml-[9px]"><ExportIcon /></div>
        <div className="ml-[9px]"><Sep /></div>
        <div className={`ml-[6px] flex h-[58px] w-[58px] items-center justify-center ${pressed}`}><EicIcon /></div>
        <div className="ml-[7px]"><TicIcon /></div>
        <div className="ml-[11px]"><Sep /></div>
        <div className={`ml-[6px] flex h-[58px] w-[58px] items-center justify-center ${pressed}`}><BarsIcon /></div>
        <div className="ml-[7px]"><GridIcon /></div>
        <div className="ml-[15px]"><NodesIcon /></div>
        <div className="ml-[13px]"><Sep /></div>
      </div>
      <Chromatogram />
    </div>
  );
}

function AlignmentDock() {
  return (
    <div className="flex h-[471px] shrink-0 flex-col">
      <div className="flex h-[44px] shrink-0 items-center justify-between pt-[12px] pr-[3px] pl-[2px]">
        <T w={304} className="-mt-[2px]">AlignmentVisualization</T>
        <svg width="12" height="12" viewBox="0 0 12 12" className="mb-[4px]">
          <rect x="0.600" y="0.600" width="10.800" height="10.800" rx="2" fill="none" stroke="#444" strokeWidth="1.100" />
          <path d="M3 5H7V9H3ZM5 5V3H9V7H7" fill="none" stroke="#444" />
        </svg>
      </div>
      <svg width="3136" height="427" viewBox="0 0 3136 427" className="block bg-white">
        <path d="M18 14.500H3121M18 93.500H3121M18 173.500H3121M18 252.500H3121M18 332.500H3121" stroke="#b2b2b2" strokeWidth="1" strokeDasharray="1 2" />
      </svg>
    </div>
  );
}

function ToolStrip() {
  return (
    <div className="flex w-[62px] shrink-0 flex-col items-center pt-[6px] pl-[2px]">
      <div className={`flex h-[58px] w-[58px] items-center justify-center ${pressed}`}><div className="pt-[5px]"><FoldersIcon /></div></div>
      <div className="mt-[7px]"><MoleculeIcon /></div>
      <div className="mt-[12px]"><SpectraIcon /></div>
      <div className={`mt-[7px] flex h-[58px] w-[58px] items-center justify-center ${pressed}`}><SlidersIcon /></div>
      <div className="mt-[8px]"><ScatterIcon /></div>
      <div className="mt-[11px]"><WavesIcon /></div>
      <div className="mt-[12px]"><CarbonIcon /></div>
      <div className="mt-[11px]"><MoleculeSearchIcon /></div>
      <div className="mt-[11px]"><PeakSearchIcon /></div>
      <div className="mt-[12px]"><ChatIcon /></div>
      <div className="mt-[14px]"><QQQIcon /></div>
      <div className="mt-[13px]"><TilesIcon /></div>
      <div className="mt-[10px] h-px w-12 bg-[#d3d0cc]" />
      <div className="mt-[11px]"><BookmarkIcon /></div>
    </div>
  );
}

function StatusBar() {
  return (
    <div className="flex h-[43px] shrink-0 border-t border-[#cfccc8] pt-[2px]">
      <div className="flex w-[3172px] items-center border border-[#bdbab5] border-t-[#b0ada8] pl-[2px]"><T w={205}>Done importing</T></div>
      <div className="mt-[11px] ml-[4px] flex h-[24px] w-[22px] items-center justify-center rounded-[4px] border border-[#b9b6b1] bg-linear-to-b from-white to-[#e8e7e5]">
        <svg width="14" height="14" viewBox="0 0 14 14"><path d="M1 1H7V5H4.500L9 8.500V12.500H13V8.500H8M1 1V5" fill="none" stroke="#444" strokeWidth="1.300" /></svg>
      </div>
    </div>
  );
}

/* ---- peak detection dialog ---- */

function Field({ disabled = false, w, className, children }: { disabled?: boolean; w: number; className: string; children: string }) {
  return (
    <Spin disabled={disabled} className={className}>
      <T w={w}>{children}</T>
    </Spin>
  );
}

function DetectionPanel() {
  return (
    <div className="-mt-px flex h-[731px] w-[1591px] flex-col rounded-r-[4px] rounded-b-[4px] border border-[#b3b0ab] bg-[#f6f6f5] pt-[20px]">
      <div className="flex h-[34px] items-center pl-[22px] font-bold">
        <Check />
        <T w={422} className="ml-[6px]">Automated Feature Detection:</T>
        <T w={693} className="ml-[21px]">Find peaks by slicing m/z and retention time space</T>
      </div>
      <div className="ml-[46px] grid grid-cols-[431px_266px_290px_266px_252px] items-center gap-y-[14px] text-[#9c9c9c]">
        <T w={405}>Mass Domain Resolution (ppm)</T>
        <Field disabled w={87} className="w-[251px]">20.000</Field>
        <T w={211}>Limit m/z Range</T>
        <Field disabled w={54} className="w-[251px]">0.00</Field>
        <Field disabled w={201} className="w-[252px]">1000000000.00</Field>
        <T w={416}>Time Domain Resolution (scans)</T>
        <Field disabled w={108} className="w-[251px]">10 scans</Field>
        <T w={226}>Limit Time Range</T>
        <Field disabled w={54} className="w-[251px]">0.00</Field>
        <Field disabled w={201} className="w-[252px]">1000000000.00</Field>
        <div className="col-span-2 flex items-center pl-[2px] text-[#aeaaa5]">
          <i className="size-[14px] rounded-full border border-[#bfbdb9] bg-[#dededc]" />
          <T w={431} className="ml-[15px]">Auto Detect And Ignore Isotopes</T>
        </div>
        <T w={276}>Limit Intensity Range</T>
        <Field disabled w={120} className="w-[251px]">50000.00</Field>
        <Field disabled w={201} className="w-[252px]">9999999999.00</Field>
      </div>

      <div className="mt-[34px] flex h-[34px] items-center pl-[22px] font-bold">
        <Check on />
        <T w={391} className="ml-[6px]">Compound Database Search:</T>
        <T w={795} className="ml-[16px]">Limit slices to set of known m/z and retention time values</T>
      </div>
      <div className="ml-[46px] grid grid-cols-[760px_745px] items-center gap-y-[14px]">
        <T w={209}>Select Database</T>
        <Combo className="pr-[5px] pl-[5px]"><T w={123}>KNOWNS</T></Combo>
        <T w={414}>EIC Extraction Window  +/- PPM</T>
        <Field w={119} className="">5.00 ppm</Field>
        <div className="flex items-center pl-[2px]">
          <Check />
          <T w={351} className="ml-[13px]">Match Retention Time (+/-)</T>
        </div>
        <Field disabled w={108} className="">1.00 min</Field>
        <T w={647}>Limit Number of Reported Groups per Compound</T>
        <Field w={94} className="">10 best</Field>
      </div>

      <div className="mt-[35px] flex">
        <div className="w-[804px]">
          <div className="flex h-[34px] items-center pl-[22px] font-bold text-[#aeaaa5]">
            <Check disabled />
            <T w={283} className="ml-[6px]">Match Fragmenation</T>
          </div>
          <div className="ml-[46px] grid grid-cols-[482px_242px] items-center gap-y-[14px] text-[#9c9c9c]">
            <T w={357}>Precursor Match Tollerance</T>
            <Field disabled w={54} className="">0.00</Field>
            <T w={467}>Fragment Peak Matching Tollerance</T>
            <Field disabled w={54} className="">0.00</Field>
            <T w={298}>Minumum Match Score</T>
            <Field disabled w={54} className="">0.00</Field>
          </div>
        </div>
        <div>
          <div className="flex h-[34px] items-center">
            <Check on />
            <div className="ml-[1px] flex h-[34px] w-[312px] items-center rounded-[4px] border border-[#f2956b] bg-[#f7e0d8] pl-[4px] font-bold text-[#6d554b]">
              <T w={300}>Report Isotopic Peaks</T>
            </div>
          </div>
          <div className="mt-[54px] ml-[24px] flex h-10 w-[723px] items-center justify-center rounded-[4px] border border-[#b57457] bg-linear-to-b from-[#feb091] to-[#f48b61]">
            <T w={347}>Isotope Detection Options</T>
          </div>
        </div>
      </div>
    </div>
  );
}

function PeakDetectionDialog() {
  return (
    <div className="absolute top-[324px] left-[773px] flex h-[1081px] w-[1635px] flex-col rounded-t-[11px] bg-[#f2f1ef] shadow-[0_14px_56px_rgba(0,0,0,0.55),0_8px_18px_rgba(0,0,0,0.4)]">
      <div className="flex h-[56px] shrink-0 items-center rounded-t-[11px] border-t border-[#6a6959] bg-linear-to-b from-[#5a584f] to-[#3e3d39] pl-[15px]">
        <svg width="70" height="34" viewBox="0 0 70 34">
          <circle cx="16" cy="17" r="15.500" fill="#f0653a" stroke="#35342f" strokeWidth="2" />
          <path d="M11.500 12.500 20.500 21.500M20.500 12.500 11.500 21.500" stroke="#3a2a22" strokeWidth="2" />
          <circle cx="54" cy="17" r="15.500" fill="#74736c" stroke="#35342f" strokeWidth="2" />
          <rect x="47.500" y="10.500" width="13" height="13" fill="none" stroke="#35342f" strokeWidth="2" />
        </svg>
        <div className="ml-[23px] font-bold text-[#dfdbd2] [text-shadow:0_-1px_1px_rgba(0,0,0,0.6)]"><T w={224}>Peak Detection</T></div>
      </div>
      <div className="mt-[22px] ml-[22px] flex h-[45px] items-end">
        <div className="z-10 flex h-[45px] w-[385px] items-center rounded-t-[5px] border border-b-0 border-[#b3b0ab] bg-linear-to-b from-white to-[#f6f6f5] pl-[7px]"><T w={367}>Feature Detection Selection</T></div>
        <div className="flex h-[42px] w-[213px] items-center border border-l-0 border-[#c0bdb9] border-b-[#b3b0ab] bg-linear-to-b from-[#f3f2f1] to-[#d9d6d3] pl-[8px]"><T w={198}>Group Filtering</T></div>
        <div className="flex h-[42px] w-[250px] items-center rounded-tr-[5px] border border-l-0 border-[#c0bdb9] border-b-[#b3b0ab] bg-linear-to-b from-[#f3f2f1] to-[#d9d6d3] pl-[8px]"><T w={233}>Method Summary</T></div>
      </div>
      <div className="ml-[22px]"><DetectionPanel /></div>
      <div className="mt-[45px] ml-[48px]"><T w={83}>Status</T></div>
      <div className="mt-[12px] ml-[48px] flex h-10">
        <div className="relative flex h-10 w-[1259px] items-center justify-center rounded-[7px] border border-[#bebbb6] border-b-white bg-[#e4e3e1]">
          <i className="absolute top-[8px] left-0 h-[24px] w-[4px] border border-[#c85a2e] bg-[#f07746]" />
          <T w={41}>0%</T>
        </div>
        <div className={`ml-[13px] w-[156px] ${plainButton}`}><T w={139}>Find Peaks</T></div>
        <div className={`ml-[14px] w-[104px] ${plainButton}`}><T w={87}>Cancel</T></div>
      </div>
      <div className={`mt-[34px] ml-[23px] h-10 w-[1589px] ${plainButton}`}><T w={313}>Use Default Parameters</T></div>
    </div>
  );
}

export default function App() {
  return (
    <div className="relative flex h-[1750px] w-[3198px] flex-col overflow-hidden bg-[#f2f1ef] font-['Noto_Sans','Open_Sans',sans-serif] text-[28px] leading-[34px] text-[#4c4c4c]">
      <Defs />
      <MenuBar />
      <MainToolbar />
      <div className="flex h-[1574px] shrink-0">
        <div className="flex w-[3136px] shrink-0 flex-col">
          <div className="flex h-[1103px] shrink-0">
            <SamplesDock />
            <PlotArea />
          </div>
          <AlignmentDock />
        </div>
        <ToolStrip />
      </div>
      <StatusBar />
      <PeakDetectionDialog />
    </div>
  );
}
